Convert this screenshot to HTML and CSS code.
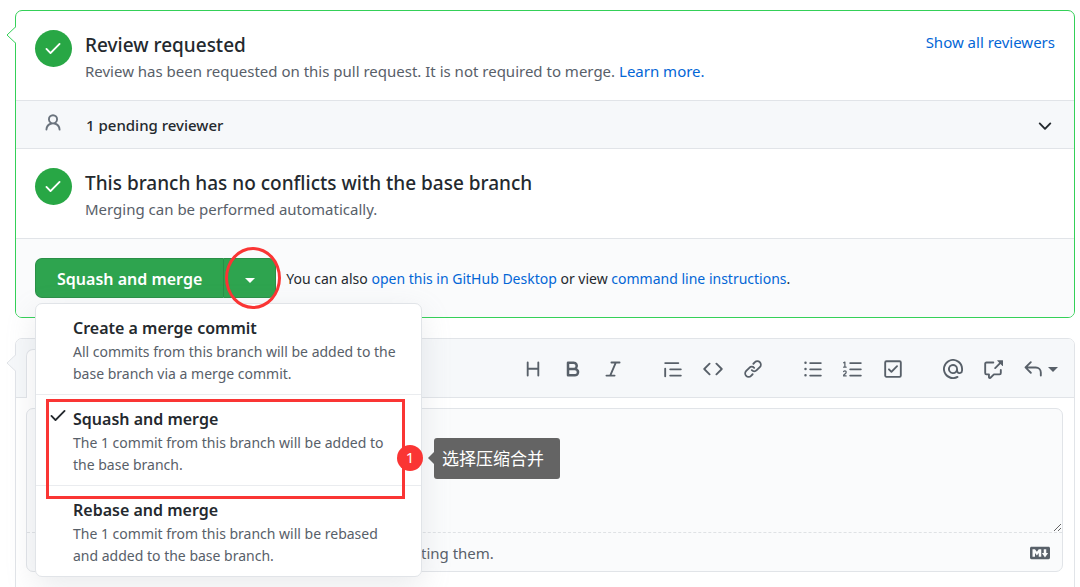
FILE: index.html
```html
<!DOCTYPE html>
<html lang="en">
<head>
<meta charset="utf-8">
<title>Pull request</title>
<link rel="stylesheet" href="styles.css">
</head>
<body>
<main class="page">
  <section class="merge-box">
    <svg class="pointer pointer-green" viewBox="0 0 10 18" aria-hidden="true"><path d="M10 0.5 1 9l9 8.5"/></svg>
    <div class="row status">
      <span class="status-icon"><svg class="icon" viewBox="0 0 16 16"><path d="M13.78 4.22a.75.75 0 010 1.06l-7.25 7.25a.75.75 0 01-1.06 0L2.22 9.28a.75.75 0 011.06-1.06L6 10.94l6.72-6.72a.75.75 0 011.06 0z"/></svg></span>
      <div class="status-body">
        <h3 class="title">Review requested</h3>
        <p class="desc">Review has been requested on this pull request. It is not required to merge. <a href="#">Learn more.</a></p>
      </div>
      <a class="show-all" href="#">Show all reviewers</a>
    </div>
    <div class="row pending">
      <svg class="icon person" viewBox="0 0 16 16"><path d="M10.5 5a2.5 2.5 0 11-5 0 2.5 2.5 0 015 0zm.061 3.073a4 4 0 10-5.123 0 6.004 6.004 0 00-3.431 5.142.75.75 0 001.498.07 4.5 4.5 0 018.99 0 .75.75 0 101.498-.07 6.005 6.005 0 00-3.432-5.142z"/></svg>
      <strong class="pending-text">1 pending reviewer</strong>
      <button class="plain" type="button" aria-label="Expand"><svg class="icon" viewBox="0 0 16 16"><path d="M12.78 6.22a.75.75 0 010 1.06l-4.25 4.25a.75.75 0 01-1.06 0L3.22 7.28a.75.75 0 011.06-1.06L8 9.94l3.72-3.72a.75.75 0 011.06 0z"/></svg></button>
    </div>
    <div class="row status">
      <span class="status-icon"><svg class="icon" viewBox="0 0 16 16"><path d="M13.78 4.22a.75.75 0 010 1.06l-7.25 7.25a.75.75 0 01-1.06 0L2.22 9.28a.75.75 0 011.06-1.06L6 10.94l6.72-6.72a.75.75 0 011.06 0z"/></svg></span>
      <div class="status-body">
        <h3 class="title">This branch has no conflicts with the base branch</h3>
        <p class="desc">Merging can be performed automatically.</p>
      </div>
    </div>
    <div class="row actions">
      <div class="button-group">
        <button class="merge-button" type="button">Squash and merge</button>
        <button class="merge-caret" type="button" aria-label="Select merge method"><span class="caret"></span></button>
        <span class="ring"></span>
        <div class="menu">
          <button class="menu-item" type="button">
            <span class="menu-title">Create a merge commit</span>
            <span class="menu-desc">All commits from this branch will be added to the base branch via a merge commit.</span>
          </button>
          <button class="menu-item" type="button">
            <svg class="icon menu-check" viewBox="0 0 16 16"><path d="M13.78 4.22a.75.75 0 010 1.06l-7.25 7.25a.75.75 0 01-1.06 0L2.22 9.28a.75.75 0 011.06-1.06L6 10.94l6.72-6.72a.75.75 0 011.06 0z"/></svg>
            <span class="menu-title">Squash and merge</span>
            <span class="menu-desc">The 1 commit from this branch will be added to the base branch.</span>
          </button>
          <button class="menu-item" type="button">
            <span class="menu-title">Rebase and merge</span>
            <span class="menu-desc">The 1 commit from this branch will be rebased and added to the base branch.</span>
          </button>
          <div class="callout-box"></div>
          <span class="callout-number">1</span>
          <span class="callout-tip" lang="zh">选择压缩合并</span>
        </div>
      </div>
      <p class="also">You can also <a href="#">open this in GitHub Desktop</a> or view <a href="#">command line instructions</a>.</p>
    </div>
  </section>

  <section class="comment-box">
    <svg class="pointer pointer-gray" viewBox="0 0 10 18" aria-hidden="true"><path d="M10 0.5 1 9l9 8.5"/></svg>
    <div class="comment-head">
      <button class="tab" type="button" aria-label="Write"></button>
      <div class="toolbar">
        <div class="tools">
          <button class="tool" type="button" aria-label="Heading"><svg class="icon" viewBox="0 0 16 16"><path d="M3.75 2a.75.75 0 01.75.75V7h7V2.75a.75.75 0 011.5 0v10.5a.75.75 0 01-1.5 0V8.5h-7v4.75a.75.75 0 01-1.5 0V2.75A.75.75 0 013.75 2z"/></svg></button>
          <button class="tool" type="button" aria-label="Bold"><svg class="icon" viewBox="0 0 16 16"><path fill-rule="evenodd" d="M4 2a1 1 0 00-1 1v10a1 1 0 001 1h5.5a3.5 3.5 0 001.852-6.47A3.5 3.5 0 008.5 2H4zm4.5 5a1.5 1.5 0 100-3H5v3h3.5zM5 9v3h4.5a1.5 1.5 0 000-3H5z"/></svg></button>
          <button class="tool" type="button" aria-label="Italic"><svg class="icon" viewBox="0 0 16 16"><path d="M6 2.75A.75.75 0 016.75 2h6.5a.75.75 0 010 1.5h-2.505l-3.858 9H9.25a.75.75 0 010 1.5h-6.5a.75.75 0 010-1.5h2.505l3.858-9H6.75A.75.75 0 016 2.75z"/></svg></button>
        </div>
        <div class="tools">
          <button class="tool" type="button" aria-label="Quote"><svg class="icon" viewBox="0 0 16 16"><path d="M1.75 2.5a.75.75 0 000 1.5h10.5a.75.75 0 000-1.5H1.75zm4 5a.75.75 0 000 1.5h8.5a.75.75 0 000-1.5h-8.5zm0 5a.75.75 0 000 1.5h8.5a.75.75 0 000-1.5h-8.5zM2.5 7.75a.75.75 0 00-1.5 0v6a.75.75 0 001.5 0v-6z"/></svg></button>
          <button class="tool" type="button" aria-label="Code"><svg class="icon" viewBox="0 0 16 16"><path d="M4.72 3.22a.75.75 0 011.06 1.06L2.06 8l3.72 3.72a.75.75 0 11-1.06 1.06L.47 8.53a.75.75 0 010-1.06l4.25-4.25zm6.56 0a.75.75 0 10-1.06 1.06L13.94 8l-3.72 3.72a.75.75 0 101.06 1.06l4.25-4.25a.75.75 0 000-1.06l-4.25-4.25z"/></svg></button>
          <button class="tool" type="button" aria-label="Link"><svg class="icon" viewBox="0 0 16 16"><path d="M7.775 3.275a.75.75 0 001.06 1.06l1.25-1.25a2 2 0 112.83 2.83l-2.5 2.5a2 2 0 01-2.83 0 .75.75 0 00-1.06 1.06 3.5 3.5 0 004.95 0l2.5-2.5a3.5 3.5 0 00-4.95-4.95l-1.25 1.25zm-4.69 9.64a2 2 0 010-2.83l2.5-2.5a2 2 0 012.83 0 .75.75 0 001.06-1.06 3.5 3.5 0 00-4.95 0l-2.5 2.5a3.5 3.5 0 004.95 4.95l1.25-1.25a.75.75 0 00-1.06-1.06l-1.25 1.25a2 2 0 01-2.83 0z"/></svg></button>
        </div>
        <div class="tools">
          <button class="tool" type="button" aria-label="Bulleted list"><svg class="icon" viewBox="0 0 16 16"><path d="M2 4a1 1 0 100-2 1 1 0 000 2zm3.75-1.5a.75.75 0 000 1.5h8.5a.75.75 0 000-1.5h-8.5zm0 5a.75.75 0 000 1.5h8.5a.75.75 0 000-1.5h-8.5zm0 5a.75.75 0 000 1.5h8.5a.75.75 0 000-1.5h-8.5zM3 8a1 1 0 11-2 0 1 1 0 012 0zm-1 6a1 1 0 100-2 1 1 0 000 2z"/></svg></button>
          <button class="tool" type="button" aria-label="Numbered list"><svg class="icon" viewBox="0 0 16 16"><path d="M2.003 2.5a.5.5 0 00-.723-.447l-1.003.5a.5.5 0 00.446.895l.28-.14V6H.5a.5.5 0 000 1h2.006a.5.5 0 100-1h-.503V2.5zM5 3.25a.75.75 0 01.75-.75h8.5a.75.75 0 010 1.5h-8.5A.75.75 0 015 3.25zm0 5a.75.75 0 01.75-.75h8.5a.75.75 0 010 1.5h-8.5A.75.75 0 015 8.25zm0 5a.75.75 0 01.75-.75h8.5a.75.75 0 010 1.5h-8.5a.75.75 0 01-.75-.75zM.924 10.32l.003-.004a.851.851 0 01.144-.153A.66.66 0 011.5 10c.195 0 .306.068.374.146a.57.57 0 01.128.376c0 .453-.269.682-.8 1.078l-.035.025C.692 11.98 0 12.495 0 13.5a.5.5 0 00.5.5h2.003a.5.5 0 000-1H1.146c.132-.197.351-.372.654-.597l.047-.035c.47-.35 1.156-.858 1.156-1.845 0-.365-.118-.744-.377-1.038-.268-.303-.658-.484-1.126-.484-.48 0-.84.202-1.068.392a1.858 1.858 0 00-.348.384.5.5 0 00.851.525z"/></svg></button>
          <button class="tool" type="button" aria-label="Task list"><svg class="icon" viewBox="0 0 16 16"><path fill-rule="evenodd" d="M2.5 2.75a.25.25 0 01.25-.25h10.5a.25.25 0 01.25.25v10.5a.25.25 0 01-.25.25H2.75a.25.25 0 01-.25-.25V2.75zM2.75 1A1.75 1.75 0 001 2.75v10.5c0 .966.784 1.75 1.75 1.75h10.5A1.75 1.75 0 0015 13.25V2.75A1.75 1.75 0 0013.25 1H2.75zm9.03 5.28a.75.75 0 00-1.06-1.06L6.75 9.19 5.28 7.72a.75.75 0 00-1.06 1.06l2 2a.75.75 0 001.06 0l4.5-4.5z"/></svg></button>
        </div>
        <div class="tools">
          <button class="tool" type="button" aria-label="Mention"><svg class="icon" viewBox="0 0 16 16"><path fill-rule="evenodd" d="M4.75 2.37a6.5 6.5 0 006.5 11.26.75.75 0 01.75 1.298 8 8 0 113.994-7.273.754.754 0 01.006.095v1.5a2.75 2.75 0 01-5.072 1.475A4 4 0 1112 8v1.25a1.25 1.25 0 002.5 0V7.867a6.5 6.5 0 00-9.75-5.496V2.37zM10.5 8a2.5 2.5 0 10-5 0 2.5 2.5 0 005 0z"/></svg></button>
          <button class="tool" type="button" aria-label="Reference"><svg class="icon" viewBox="0 0 16 16"><path d="M16 1.25v4.146a.25.25 0 01-.427.177L14.03 4.03l-3.75 3.75a.75.75 0 11-1.06-1.06l3.75-3.75-1.543-1.543A.25.25 0 0111.604 1h4.146a.25.25 0 01.25.25zM2.75 3.5a.25.25 0 00-.25.25v7.5c0 .138.112.25.25.25h2a.75.75 0 01.75.75v2.19l2.72-2.72a.75.75 0 01.53-.22h4.5a.25.25 0 00.25-.25v-2.5a.75.75 0 111.5 0v2.5A1.75 1.75 0 0113.25 13H9.06l-2.573 2.573A1.457 1.457 0 014 14.543V13H2.75A1.75 1.75 0 011 11.25v-7.5C1 2.784 1.784 2 2.75 2h5.5a.75.75 0 010 1.5h-5.5z"/></svg></button>
          <button class="tool tool-reply" type="button" aria-label="Saved replies"><svg class="icon" viewBox="0 0 16 16"><path d="M6.78 1.97a.75.75 0 010 1.06L3.81 6h6.44A4.75 4.75 0 0115 10.75v2.5a.75.75 0 01-1.5 0v-2.5a3.25 3.25 0 00-3.25-3.25H3.81l2.97 2.97a.75.75 0 11-1.06 1.06L1.47 7.28a.75.75 0 010-1.06l4.25-4.25a.75.75 0 011.06 0z"/></svg><span class="caret"></span></button>
        </div>
      </div>
    </div>
    <div class="editor">
      <textarea class="editor-input" aria-label="Comment"></textarea>
      <div class="editor-foot">
        <span class="attach">ting them.</span>
        <a class="markdown" href="#" aria-label="Markdown is supported"><svg class="icon" viewBox="0 0 16 16"><path fill-rule="evenodd" d="M14.85 3H1.15C.52 3 0 3.52 0 4.15v7.69C0 12.48.52 13 1.15 13h13.69c.64 0 1.15-.52 1.15-1.15v-7.7C16 3.52 15.48 3 14.85 3zM9 11H7V8L5.5 9.92 4 8v3H2V5h2l1.5 2L7 5h2v6zm2.99.5L9.5 8H11V5h2v3h1.5l-2.51 3.5z"/></svg></a>
      </div>
    </div>
  </section>
</main>
</body>
</html>
```

FILE: styles.css
```css
* { box-sizing: border-box; }
body {
  margin: 0;
  background: #fff;
  color: #24292e;
  font: 15px/22px "Noto Sans", "Open Sans", sans-serif;
  overflow: hidden;
}
h3, p { margin: 0; }
a { color: #0366d6; text-decoration: none; }
button { font: inherit; color: inherit; }
.icon { display: block; width: 20px; height: 20px; fill: currentColor; flex: none; }
.page {
  display: flex;
  flex-direction: column;
  gap: 20px;
  padding: 10px 5px 0 15px;
}

.merge-box {
  position: relative;
  z-index: 1;
  border: 1px solid #34d058;
  border-radius: 7px;
}
.pointer { position: absolute; left: -10px; width: 10px; height: 18px; overflow: visible; }
.pointer path { fill: #fff; stroke: #34d058; stroke-width: 1; }
.pointer-green { top: 15px; }
.row { border-bottom: 1px solid #e1e4e8; }
.row:last-child { border-bottom: 0; }
.status { display: flex; align-items: flex-start; gap: 13px; padding: 19px 19px 17px; }
.status-icon {
  display: grid;
  place-items: center;
  width: 37px;
  height: 37px;
  padding: 0 1px 1px 0;
  border-radius: 50%;
  background: #28a745;
  color: #fff;
}
.status-body { flex: 1; padding-top: 2px; }
.title { font-size: 19px; line-height: 26px; font-weight: 500; }
.desc { line-height: 26px; margin-bottom: -1px; color: #586069; }
.show-all { line-height: 24px; }
.pending {
  display: flex;
  align-items: center;
  padding: 12px 19px 11px 27px;
  background: #f6f8fa;
}
.person { color: #6a737d; margin: 0 23px 4px 0; }
.pending-text { flex: 1; line-height: 23px; font-weight: 500; }
.plain { padding: 0; border: 0; background: none; }
.actions {
  display: flex;
  align-items: center;
  gap: 10px;
  padding: 19px;
  background: #fafbfc;
  border-radius: 0 0 6px 6px;
}
.also { padding-top: 1px; font-size: 14px; }

.button-group { position: relative; display: flex; height: 40px; }
.merge-button, .merge-caret {
  border: 1px solid #2a8f47;
  background: #2ea44f;
  color: #fff;
}
.merge-button {
  padding: 1px 21px 0;
  border-right: 0;
  border-radius: 7px 0 0 7px;
  font-size: 16px;
  font-weight: 600;
}
.merge-caret {
  display: grid;
  place-items: center;
  width: 53px;
  padding: 4px 0 0;
  border-radius: 0 7px 7px 0;
}
.caret { border: 5px solid transparent; border-top-color: currentColor; border-bottom: 0; }
.ring {
  position: absolute;
  z-index: 2;
  top: -11px;
  right: -5px;
  width: 56px;
  height: 62px;
  border: 3px solid #fa3534;
  border-radius: 50%;
}

.menu {
  position: absolute;
  z-index: 1;
  top: 45px;
  left: 0;
  width: 387px;
  border: 1px solid #e1e4e8;
  border-radius: 7px;
  background: #fff;
  box-shadow: 0 10px 30px rgba(149, 157, 165, 0.2);
}
.menu-item {
  position: relative;
  display: block;
  width: 100%;
  padding: 11px 20px 9px 37px;
  border: 0;
  border-bottom: 1px solid #eaecef;
  background: none;
  text-align: left;
}
.menu-item:nth-of-type(3) { border-bottom: 0; }
.menu-title { display: block; font-size: 16px; line-height: 26px; font-weight: 600; }
.menu-desc { display: block; font-size: 14px; color: #586069; }
.menu-check { position: absolute; top: 10px; left: 12px; }
.callout-box {
  position: absolute;
  top: 95px;
  left: 10px;
  width: 359px;
  height: 100px;
  border: 3px solid #fa3534;
}
.callout-number {
  position: absolute;
  top: 141px;
  left: 361px;
  width: 26px;
  height: 26px;
  border-radius: 50%;
  background: #fa3534;
  color: #fff;
  line-height: 24px;
  text-align: center;
}
.callout-tip {
  position: absolute;
  top: 134px;
  left: 398px;
  padding: 0 16px 2px 8px;
  border-radius: 3px;
  background: #646464;
  color: #fff;
  font: 17px/39px "Noto Sans CJK SC", sans-serif;
  white-space: nowrap;
}
.callout-tip::before {
  content: "";
  position: absolute;
  top: 14px;
  left: -6px;
  border: 6px solid transparent;
  border-right-color: #646464;
  border-left: 0;
}

.comment-box {
  position: relative;
  border: 1px solid #e1e4e8;
  border-radius: 7px;
  padding-bottom: 40px;
}
.pointer-gray { top: 15px; }
.pointer-gray path { fill: #f6f8fa; stroke: #e1e4e8; }
.comment-head {
  display: flex;
  align-items: flex-end;
  justify-content: space-between;
  padding: 10px 10px 0;
  border-bottom: 1px solid #e1e4e8;
  border-radius: 6px 6px 0 0;
  background: #f6f8fa;
}
.tab {
  width: 90px;
  height: 49px;
  margin-bottom: -1px;
  border: 1px solid #e1e4e8;
  border-bottom: 0;
  border-radius: 7px 7px 0 0;
  background: #fff;
}
.toolbar { display: flex; gap: 20px; padding-bottom: 8px; }
.tools { display: flex; }
.tool {
  display: flex;
  align-items: center;
  gap: 5px;
  padding: 10px;
  border: 0;
  background: none;
  color: #586069;
}
.tool-reply { padding-right: 6px; }
.editor {
  margin: 10px 11px 0 10px;
  border: 1px solid #e1e4e8;
  border-radius: 7px;
  background: #fafbfc;
}
.editor-input {
  display: block;
  width: 100%;
  height: 124px;
  padding: 10px;
  border: 0;
  border-bottom: 1px dashed #dfe2e5;
  background: none;
  font: inherit;
  resize: vertical;
}
.editor-foot {
  display: flex;
  align-items: center;
  justify-content: space-between;
  height: 38px;
  padding: 2px 12px 0 394px;
  color: #586069;
}
.markdown { color: #586069; }
```
